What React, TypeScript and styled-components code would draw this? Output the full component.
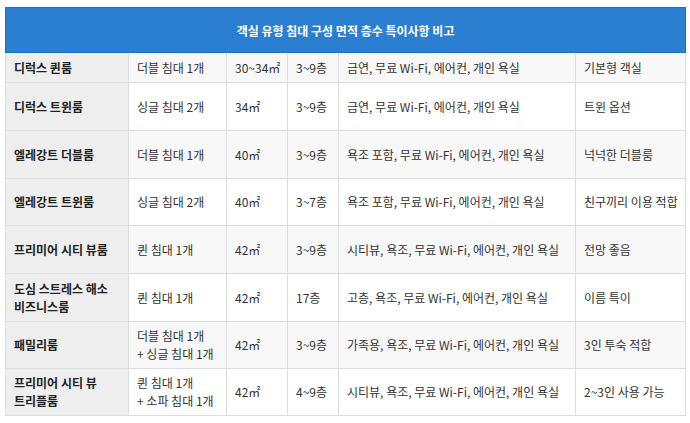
import React from "react";
import styled, { createGlobalStyle } from "styled-components";

type Room = {
  name: string[];
  bed: string[];
  area: string;
  floor: string;
  features: string;
  note: string;
  height: number;
};

const rooms: Room[] = [
  { name: ["디럭스 퀸룸"], bed: ["더블 침대 1개"], area: "30~34㎡", floor: "3~9층", features: "금연, 무료 Wi-Fi, 에어컨, 개인 욕실", note: "기본형 객실", height: 30 },
  { name: ["디럭스 트윈룸"], bed: ["싱글 침대 2개"], area: "34㎡", floor: "3~9층", features: "금연, 무료 Wi-Fi, 에어컨, 개인 욕실", note: "트윈 옵션", height: 48 },
  { name: ["엘레강트 더블룸"], bed: ["더블 침대 1개"], area: "40㎡", floor: "3~9층", features: "욕조 포함, 무료 Wi-Fi, 에어컨, 개인 욕실", note: "넉넉한 더블룸", height: 48 },
  { name: ["엘레강트 트윈룸"], bed: ["싱글 침대 2개"], area: "40㎡", floor: "3~7층", features: "욕조 포함, 무료 Wi-Fi, 에어컨, 개인 욕실", note: "친구끼리 이용 적합", height: 47 },
  { name: ["프리미어 시티 뷰룸"], bed: ["퀸 침대 1개"], area: "42㎡", floor: "3~9층", features: "시티뷰, 욕조, 무료 Wi-Fi, 에어컨, 개인 욕실", note: "전망 좋음", height: 48 },
  { name: ["도심 스트레스 해소", "비즈니스룸"], bed: ["퀸 침대 1개"], area: "42㎡", floor: "17층", features: "고층, 욕조, 무료 Wi-Fi, 에어컨, 개인 욕실", note: "이름 특이", height: 48 },
  { name: ["패밀리룸"], bed: ["더블 침대 1개", "+ 싱글 침대 1개"], area: "42㎡", floor: "3~9층", features: "가족용, 욕조, 무료 Wi-Fi, 에어컨, 개인 욕실", note: "3인 투숙 적합", height: 47 },
  { name: ["프리미어 시티 뷰", "트리플룸"], bed: ["퀸 침대 1개", "+ 소파 침대 1개"], area: "42㎡", floor: "4~9층", features: "시티뷰, 욕조, 무료 Wi-Fi, 에어컨, 개인 욕실", note: "2~3인 사용 가능", height: 47 },
];

const widths = [123, 98, 61, 51, 237, 110];

const GlobalStyle = createGlobalStyle`
  body {
    margin: 0;
    background: #fff;
    font-family: "Noto Sans CJK KR", "Noto Sans", sans-serif;
  }
`;

const Page = styled.div`
  padding: 7px 5px;
`;

const Table = styled.table`
  width: 680px;
  border-collapse: collapse;
  table-layout: fixed;
  font-size: 12px;
  color: #333;
`;

const HeadCell = styled.th`
  height: 44px;
  padding: 0;
  background: #2a7fd0;
  border: 1px solid #1f6fb9;
  color: #fff;
  font-weight: 700;
  font-size: 12px;
  text-align: center;
`;

const Row = styled.tr<{ $shade: boolean }>`
  background: ${(p) => (p.$shade ? "#f8f8f8" : "#fff")};
`;

const Cell = styled.td`
  padding: 0 8px;
  border: 1px solid #dddddd;
  line-height: 18px;
  vertical-align: middle;
  white-space: nowrap;
`;

const NameCell = styled(Cell)`
  background: #eeeeee;
  font-weight: 700;
  color: #222;
`;

function Lines({ items }: { items: string[] }) {
  return (
    <>
      {items.map((t, i) => (
        <div key={i}>{t}</div>
      ))}
    </>
  );
}

export default function App() {
  return (
    <Page>
      <GlobalStyle />
      <Table>
        <colgroup>
          {widths.map((w, i) => (
            <col key={i} style={{ width: w }} />
          ))}
        </colgroup>
        <thead>
          <tr>
            <HeadCell colSpan={6}>객실 유형 침대 구성 면적 층수 특이사항 비고</HeadCell>
          </tr>
        </thead>
        <tbody>
          {rooms.map((r, i) => (
            <Row key={i} $shade={i % 2 === 0} style={{ height: r.height }}>
              <NameCell>
                <Lines items={r.name} />
              </NameCell>
              <Cell>
                <Lines items={r.bed} />
              </Cell>
              <Cell>{r.area}</Cell>
              <Cell>{r.floor}</Cell>
              <Cell>{r.features}</Cell>
              <Cell>{r.note}</Cell>
            </Row>
          ))}
        </tbody>
      </Table>
    </Page>
  );
}
